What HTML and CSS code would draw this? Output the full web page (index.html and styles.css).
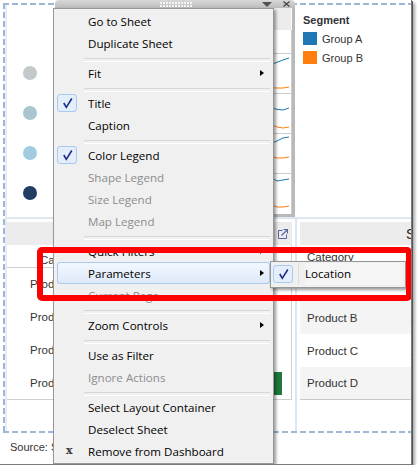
FILE: index.html
```html
<!DOCTYPE html>
<html>
<head>
<meta charset="utf-8">
<link rel="stylesheet" href="styles.css">
</head>
<body>
<div class="screen">
  <div class="dashboard">
    <div class="left">
      <div class="dots">
        <span class="dot d1"></span>
        <span class="dot d2"></span>
        <span class="dot d3"></span>
        <span class="dot d4"></span>
      </div>
      <div class="hsep"></div>
      <div class="ltable">
        <div class="thead"></div>
        <div class="lrow cat">Category</div>
        <div class="lrow">Product A</div>
        <div class="lrow">Product B</div>
        <div class="lrow">Product C</div>
        <div class="lrow last">Product D</div>
      </div>
    </div>

    <div class="middle">
      <div class="grip">
        <span class="grip-dots"></span>
        <span class="grip-dd"></span>
        <svg class="grip-x" width="7" height="6" viewBox="0 0 7 6"><path d="M0.5 0.5 L6.5 5.5 M6.5 0.5 L0.5 5.5" stroke="#454545" stroke-width="1.3" fill="none"/></svg>
      </div>
      <div class="sheet">
        <svg width="237" height="209" viewBox="0 0 237 209">
          <rect x="0" y="3" width="236" height="22" fill="#ececec"/>
          <g stroke="#cdcdcd" stroke-width="1">
            <line x1="0" y1="48.5" x2="236" y2="48.5"/>
            <line x1="0" y1="88.5" x2="236" y2="88.5"/>
            <line x1="0" y1="128.5" x2="236" y2="128.5"/>
            <line x1="0" y1="168.5" x2="236" y2="168.5"/>
            <line x1="236.5" y1="25" x2="236.5" y2="209"/>
          </g>
          <g fill="none" stroke="#1f77b4" stroke-width="1">
            <polyline points="212,64 220,58 228,55 234,53"/>
            <polyline points="214,98 220,104 228,105 234,103"/>
            <polyline points="212,140 222,136 228,133 234,132"/>
            <polyline points="214,171 222,176 228,175 234,174"/>
          </g>
          <g fill="none" stroke="#ff7f0e" stroke-width="1">
            <polyline points="212,80 220,83 228,83 234,82"/>
            <polyline points="212,118 222,122 228,123 234,122"/>
            <polyline points="212,150 222,153 228,153 234,152"/>
            <polyline points="212,198 222,202 228,202 234,201"/>
          </g>
        </svg>
      </div>
      <div class="hsep"></div>
      <div class="mlower">
        <div class="thead mhead">
          <svg width="10" height="11" viewBox="0 0 10 11"><path d="M4.5 2.5 H0.5 V10.5 H8.5 V6.5" fill="none" stroke="#5a63a6" stroke-width="1"/><path d="M3.5 7.5 L9 2 M5.5 1.5 H9.5 V5.5" fill="none" stroke="#5a63a6" stroke-width="1.2"/></svg>
        </div>
        <div class="mrow cat"></div>
        <div class="mrow"><span class="bar" style="width:176px"></span></div>
        <div class="mrow"><span class="bar" style="width:140px"></span></div>
        <div class="mrow"><span class="bar" style="width:196px"></span></div>
        <div class="mrow last"><span class="bar" style="width:222px"></span></div>
      </div>
    </div>

    <div class="right">
      <div class="legend">
        <div class="lg-title">Segment</div>
        <div class="lg-item"><span class="sw blue"></span>Group A</div>
        <div class="lg-item"><span class="sw orange"></span>Group B</div>
      </div>
      <div class="hsep"></div>
      <div class="rlower">
        <div class="thead rhead"><span class="rlab hl"></span><span class="rval hd">Sales</span></div>
        <div class="rrow cat"><span class="rlab">Category</span><span class="rval">C</span></div>
        <div class="rrow"><span class="rlab"></span><span class="rval"></span></div>
        <div class="rrow alt"><span class="rlab">Product B</span><span class="rval">1</span></div>
        <div class="rrow"><span class="rlab">Product C</span><span class="rval">1</span></div>
        <div class="rrow alt last"><span class="rlab">Product D</span><span class="rval"></span></div>
      </div>
    </div>
  </div>

  <div class="source">Source: Sample Data</div>

  <div class="menu">
    <div class="mi"><span class="ico"></span><span class="lbl">Go to Sheet</span></div>
    <div class="mi"><span class="ico"></span><span class="lbl">Duplicate Sheet</span></div>
    <div class="msep"></div>
    <div class="mi"><span class="ico"></span><span class="lbl">Fit</span><span class="arr"></span></div>
    <div class="msep"></div>
    <div class="mi"><span class="ico"><span class="chk"><svg width="18" height="16" viewBox="0 0 18 16"><path d="M5.8 8 L8.3 12.3 L13.8 3.5" fill="none" stroke="#1b2a88" stroke-width="1.6"/></svg></span></span><span class="lbl">Title</span></div>
    <div class="mi"><span class="ico"></span><span class="lbl">Caption</span></div>
    <div class="msep"></div>
    <div class="mi"><span class="ico"><span class="chk"><svg width="18" height="16" viewBox="0 0 18 16"><path d="M5.8 8 L8.3 12.3 L13.8 3.5" fill="none" stroke="#1b2a88" stroke-width="1.6"/></svg></span></span><span class="lbl">Color Legend</span></div>
    <div class="mi dis"><span class="ico"></span><span class="lbl">Shape Legend</span></div>
    <div class="mi dis"><span class="ico"></span><span class="lbl">Size Legend</span></div>
    <div class="mi dis"><span class="ico"></span><span class="lbl">Map Legend</span></div>
    <div class="msep"></div>
    <div class="mi"><span class="ico"></span><span class="lbl">Quick Filters</span><span class="arr"></span></div>
    <div class="mi hot"><span class="ico"></span><span class="lbl">Parameters</span><span class="arr"></span></div>
    <div class="mi dis"><span class="ico"></span><span class="lbl">Current Page</span></div>
    <div class="msep"></div>
    <div class="mi"><span class="ico"></span><span class="lbl">Zoom Controls</span><span class="arr"></span></div>
    <div class="msep"></div>
    <div class="mi"><span class="ico"></span><span class="lbl">Use as Filter</span></div>
    <div class="mi dis"><span class="ico"></span><span class="lbl">Ignore Actions</span></div>
    <div class="msep"></div>
    <div class="mi"><span class="ico"></span><span class="lbl">Select Layout Container</span></div>
    <div class="mi"><span class="ico"></span><span class="lbl">Deselect Sheet</span></div>
    <div class="mi"><span class="ico"><span class="xic">x</span></span><span class="lbl">Remove from Dashboard</span></div>
  </div>

  <div class="submenu">
    <div class="mi"><span class="ico sico"><span class="chk"><svg width="18" height="16" viewBox="0 0 18 16"><path d="M5.8 8 L8.3 12.3 L13.8 3.5" fill="none" stroke="#1b2a88" stroke-width="1.6"/></svg></span></span><span class="lbl">Location</span></div>
  </div>

  <div class="annot"></div>
</div>
</body>
</html>
```

FILE: styles.css
```css
* { box-sizing: border-box; margin: 0; padding: 0; }
html, body { background: #fff; }
body { margin: 0; }

.screen {
  position: relative;
  width: 412px;
  height: 465px;
  background: #fff;
  overflow: hidden;
  border-right: 1px solid #7a7a7a;
  border-bottom: 1px solid #7a7a7a;
  box-shadow: 1px 1px 0 #555, 3px 3px 3px rgba(0,0,0,0.35);
  font-family: "Liberation Sans", Arial, sans-serif;
  color: #333;
}

/* dashboard container with dashed outline */
.dashboard {
  margin: 3px 0 0 3px;
  width: 420px;
  height: 430px;
  padding: 2px 0 2px 2px;
  display: grid;
  grid-template-columns: 50px 240px 1fr;
  background:
    repeating-linear-gradient(90deg, #9fb6d5 0 6px, transparent 6px 9px) left top / 100% 2px no-repeat,
    repeating-linear-gradient(90deg, #9fb6d5 0 6px, transparent 6px 9px) left bottom / 100% 2px no-repeat,
    repeating-linear-gradient(180deg, #9fb6d5 0 6px, transparent 6px 9px) left top / 2px 100% no-repeat;
}

.hsep { height: 2px; background: #dde7f2; }

.thead { height: 23px; margin-top: 3px; background: #ececec; }

/* left panel */
.left { display: flex; flex-direction: column; border-left: 2px solid #e4ecf6; overflow: hidden; }
.dots { height: 212px; padding: 61px 0 0 16px; display: flex; flex-direction: column; gap: 26px; }
.dot { width: 14px; height: 14px; border-radius: 50%; display: block; }
.d1 { background: #c3c9cb; }
.d2 { background: #a8c5d0; }
.d3 { background: #a0cbe1; }
.d4 { background: #213d64; }

.ltable { display: flex; flex-direction: column; }
.lrow { height: 33px; line-height: 33px; font-size: 11.5px; padding-left: 23px; white-space: nowrap; }
.lrow.cat { height: 23px; line-height: 14px; padding: 8px 0 0 33px; border-bottom: 1px solid #cfcfcf; }
.lrow.last { border-bottom: 1px solid #cfcfcf; }

/* middle sheet */
.middle { position: relative; display: flex; flex-direction: column; }
.grip {
  position: absolute;
  top: -5px;
  left: 0;
  width: 240px;
  height: 8px;
  border-radius: 4px 4px 0 0;
  background: linear-gradient(#d8d8d8, #bcbcbc);
  display: flex;
  align-items: center;
  padding-right: 5px;
}
.grip-dots {
  margin-left: 105px;
  width: 32px;
  height: 5px;
  background: radial-gradient(circle at 1px 1px, #f4f4f4 0.8px, transparent 1.1px) 0 0 / 3px 3px;
}
.grip-dd {
  margin-left: auto;
  width: 0;
  height: 0;
  border-top: 5px solid #505050;
  border-left: 5px solid transparent;
  border-right: 5px solid transparent;
}
.grip-x { margin-left: 11px; display: block; }

.sheet {
  height: 212px;
  border-right: 3px solid #b9b9b9;
  border-bottom: 3px solid #b9b9b9;
  overflow: hidden;
}
.sheet svg { display: block; }

.mlower { display: flex; flex-direction: column; padding-right: 3px; }
.mhead { display: flex; justify-content: flex-end; align-items: center; padding-right: 4px; }
.mhead svg { display: block; }
.mrow { height: 33px; display: flex; align-items: center; padding-left: 5px; border-right: 1px solid #cfcfcf; }
.mrow.cat { height: 23px; border-bottom: 1px solid #cfcfcf; }
.mrow.last { border-bottom: 1px solid #cfcfcf; }
.bar { display: block; height: 23px; background: #1f7a3a; }

/* right panel */
.right { display: flex; flex-direction: column; overflow: hidden; }
.legend { height: 212px; padding: 8px 0 0 8px; }
.lg-title { font-size: 11px; font-weight: bold; line-height: 14px; color: #333; }
.lg-item { display: flex; align-items: center; height: 19px; font-size: 11px; color: #333; }
.lg-title + .lg-item { margin-top: 2px; }
.sw { width: 14px; height: 13px; margin-right: 5px; display: block; }
.sw.blue { background: #1f77b4; }
.sw.orange { background: #ff7f0e; }

.rlower { flex: 1; border-left: 2px solid #dde7f2; padding-left: 3px; display: flex; flex-direction: column; }
.rhead { display: flex; align-items: center; }
.rrow { height: 33px; display: flex; align-items: center; font-size: 11.5px; white-space: nowrap; }
.rrow.cat { height: 23px; align-items: flex-start; padding-top: 6px; }
.rrow.alt { background: #f4f4f4; }
.rrow.last { border-bottom: 1px solid #c8c8c8; }
.rlab { width: 108px; flex: none; padding-left: 7px; }
.rlab.hl { width: 106px; }
.rval { padding-left: 2px; }
.rval.hd { padding-left: 0; font-size: 14px; color: #222; }

.source { font-size: 11px; line-height: 14px; padding: 7px 0 0 10px; color: #333; }

/* context menu */
.menu {
  position: absolute;
  left: 53px;
  top: 8px;
  width: 221px;
  height: 456px;
  background: #f0f0f0;
  border: 1px solid #979797;
  padding: 1px 3px 1px 3px;
  box-shadow: 2px 2px 3px rgba(0,0,0,0.4);
  font-family: "Open Sans", "Noto Sans", sans-serif;
  font-size: 11.6px;
  color: #000;
  z-index: 5;
}
.mi { display: flex; align-items: center; height: 22px; white-space: nowrap; }
.mi.dis { color: #8d8d8d; }
.mi.hot {
  background: linear-gradient(#f3f8fe, #dde9f9);
  box-shadow: inset 0 0 0 1px #a9c9ef;
  border-radius: 3px;
}
.ico { width: 31px; height: 18px; flex: none; display: flex; align-items: center; }
.chk {
  width: 20px;
  height: 18px;
  border: 1px solid #a9caef;
  border-radius: 3px;
  background: #e4edfa;
  display: flex;
  align-items: center;
  justify-content: center;
}
.chk svg { display: block; }
.xic {
  margin-left: 9px;
  font-family: "DejaVu Serif", "Liberation Serif", serif;
  font-weight: bold;
  font-size: 11px;
  color: #3a3a3a;
  line-height: 18px;
}
.lbl { flex: 1; }
.arr {
  width: 0;
  height: 0;
  margin-right: 6px;
  border-left: 4px solid #000;
  border-top: 3.5px solid transparent;
  border-bottom: 3.5px solid transparent;
}
.msep {
  height: 8px;
  margin-left: 27px;
  padding-top: 4px;
}
.msep::before {
  content: "";
  display: block;
  height: 2px;
  border-top: 1px solid #d7d7d7;
  border-bottom: 1px solid #ffffff;
}

.submenu {
  position: absolute;
  left: 270px;
  top: 261px;
  width: 136px;
  height: 27px;
  background: #f0f0f0;
  border: 1px solid #979797;
  padding: 1px 2px 1px 2px;
  box-shadow: 2px 2px 3px rgba(0,0,0,0.4);
  font-family: "Open Sans", "Noto Sans", sans-serif;
  font-size: 11.6px;
  color: #000;
  z-index: 6;
}
.sico { width: 26px; height: 22px; border-right: 1px solid #dcdcdc; margin-right: 6px; }
.submenu .lbl { background: #f5f5f5; height: 22px; line-height: 22px; }

.annot {
  position: absolute;
  left: 37px;
  top: 247px;
  width: 375px;
  height: 54px;
  border: 6px solid #ff0000;
  border-radius: 5px;
  z-index: 10;
}
```
